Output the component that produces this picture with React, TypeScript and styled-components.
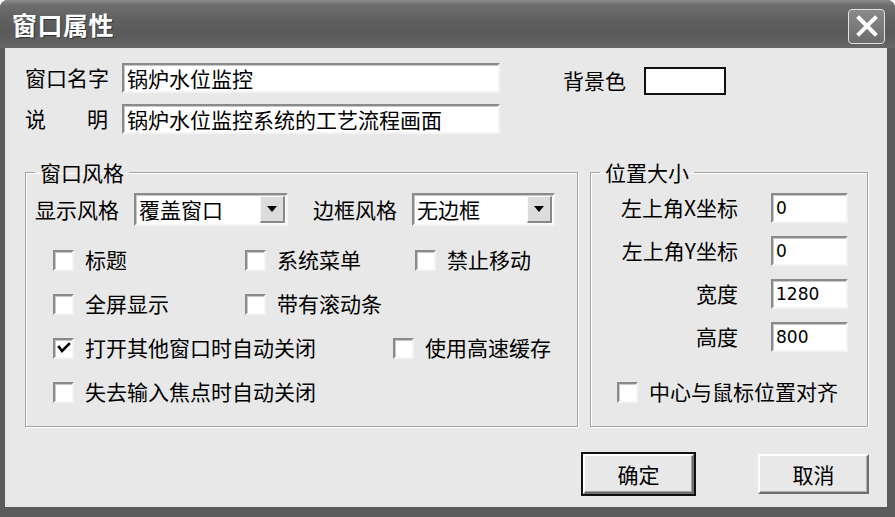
import React, { useState } from 'react';
import styled, { createGlobalStyle } from 'styled-components';

const GlobalStyle = createGlobalStyle`
  html, body {
    margin: 0;
    padding: 0;
    background: #ffffff;
  }
  body {
    font-family: "Noto Sans CJK SC", "DejaVu Sans", sans-serif;
    color: #000;
  }
`;

interface CheckItem {
  label: string;
  checked?: boolean;
  width?: number;
}

const styleRows: CheckItem[][] = [
  [{ label: '标题', width: 192 }, { label: '系统菜单', width: 170 }, { label: '禁止移动' }],
  [{ label: '全屏显示', width: 192 }, { label: '带有滚动条' }],
  [{ label: '打开其他窗口时自动关闭', checked: true, width: 340 }, { label: '使用高速缓存' }],
  [{ label: '失去输入焦点时自动关闭' }],
];

const positionFields = [
  { label: '左上角X坐标', value: '0' },
  { label: '左上角Y坐标', value: '0' },
  { label: '宽度', value: '1280' },
  { label: '高度', value: '800' },
];

const CheckBox: React.FC<{ item: CheckItem }> = ({ item }) => {
  const [checked, setChecked] = useState(!!item.checked);
  return (
    <CheckLabel $width={item.width} onClick={() => setChecked(!checked)}>
      <CheckSquare>
        {checked && (
          <svg width="14" height="14" viewBox="0 0 14 14">
            <path d="M2 6 L5 10 L12 3" stroke="#000" strokeWidth="2.6" fill="none" strokeLinecap="square" />
          </svg>
        )}
      </CheckSquare>
      <span>{item.label}</span>
    </CheckLabel>
  );
};

const Select: React.FC<{ value: string; width: number }> = ({ value, width }) => (
  <SelectBox $width={width}>
    <span>{value}</span>
    <DropButton>
      <svg width="10" height="6" viewBox="0 0 10 6">
        <path d="M0 0 H10 L5 6 Z" fill="#000" />
      </svg>
    </DropButton>
  </SelectBox>
);

const App: React.FC = () => {
  return (
    <>
      <GlobalStyle />
      <Window>
        <TitleBar>
          <Title>窗口属性</Title>
          <CloseButton>
            <svg width="22" height="22" viewBox="0 0 22 22">
              <path d="M3 3 L19 19 M19 3 L3 19" stroke="#fff" strokeWidth="4" strokeLinecap="square" />
            </svg>
          </CloseButton>
        </TitleBar>
        <Body>
          <TopArea>
            <FieldColumn>
              <FieldRow>
                <FieldLabel>窗口名字</FieldLabel>
                <TextBox $width={378}>锅炉水位监控</TextBox>
              </FieldRow>
              <FieldRow>
                <FieldLabel>说明</FieldLabel>
                <TextBox $width={378}>锅炉水位监控系统的工艺流程画面</TextBox>
              </FieldRow>
            </FieldColumn>
            <ColorPicker>
              <span>背景色</span>
              <ColorSwatch />
            </ColorPicker>
          </TopArea>

          <Groups>
            <GroupBox $width={553}>
              <Legend>窗口风格</Legend>
              <SelectRow>
                <SelectLabel>显示风格</SelectLabel>
                <Select value="覆盖窗口" width={154} />
                <SelectLabel $offset={25}>边框风格</SelectLabel>
                <Select value="无边框" width={143} />
              </SelectRow>
              <CheckGrid>
                {styleRows.map((row, i) => (
                  <CheckRow key={i}>
                    {row.map((item) => (
                      <CheckBox key={item.label} item={item} />
                    ))}
                  </CheckRow>
                ))}
              </CheckGrid>
            </GroupBox>

            <GroupBox $width={278}>
              <Legend>位置大小</Legend>
              <PositionGrid>
                {positionFields.map((f) => (
                  <React.Fragment key={f.label}>
                    <PositionLabel>{f.label}</PositionLabel>
                    <NumberBox>{f.value}</NumberBox>
                  </React.Fragment>
                ))}
              </PositionGrid>
              <CenterRow>
                <CheckBox item={{ label: '中心与鼠标位置对齐' }} />
              </CenterRow>
            </GroupBox>
          </Groups>

          <ButtonRow>
            <DialogButton $primary>确定</DialogButton>
            <DialogButton>取消</DialogButton>
          </ButtonRow>
        </Body>
      </Window>
    </>
  );
};

const Window = styled.div`
  width: 895px;
  height: 517px;
  box-sizing: border-box;
  background: #5c5c5c;
  border-radius: 8px 8px 0 0;
  padding: 0 8px 10px 5px;
  display: flex;
  flex-direction: column;
`;

const TitleBar = styled.div`
  height: 48px;
  margin: 0 -8px 0 -5px;
  padding: 0 10px 0 12px;
  border-radius: 8px 8px 0 0;
  background: linear-gradient(#8c8c8c 0, #6e6e6e 10%, #5e5e5e 45%, #5a5a5a 70%, #666 100%);
  display: flex;
  align-items: center;
  justify-content: space-between;
`;

const Title = styled.div`
  color: #fff;
  font-size: 25px;
  font-weight: 700;
  letter-spacing: 0.5px;
  text-shadow: 1px 1px 0 #333;
`;

const CloseButton = styled.div`
  width: 35px;
  height: 33px;
  margin-top: 4px;
  border: 1px solid #e0e0e0;
  border-radius: 4px;
  background: linear-gradient(#8a8a8a, #6c6c6c);
  display: flex;
  align-items: center;
  justify-content: center;
`;

const Body = styled.div`
  flex: 1;
  background: #e8e8e8;
  padding: 15px 18px 0 20px;
  font-size: 21px;
  line-height: 1.2;
`;

const TopArea = styled.div`
  display: flex;
  align-items: flex-start;
`;

const FieldColumn = styled.div`
  display: flex;
  flex-direction: column;
  gap: 11px;
`;

const FieldRow = styled.div`
  display: flex;
  align-items: center;
  gap: 14px;
`;

const FieldLabel = styled.div`
  width: 83px;
  text-align: justify;
  text-align-last: justify;
  white-space: nowrap;
`;

const sunken = `
  box-sizing: border-box;
  background: #fff;
  border-top: 2px solid #8a8a8a;
  border-left: 2px solid #8a8a8a;
  border-bottom: 2px solid #f4f4f4;
  border-right: 2px solid #f4f4f4;
  box-shadow: inset 1px 1px 0 #c8c8c8;
`;

const TextBox = styled.div<{ $width: number }>`
  ${sunken}
  width: ${(p) => p.$width}px;
  height: 30px;
  padding: 0 3px;
  font-size: 21px;
  line-height: 26px;
  white-space: nowrap;
  overflow: hidden;
`;

const ColorPicker = styled.div`
  margin-left: 63px;
  margin-top: 4px;
  display: flex;
  align-items: center;
  gap: 18px;
`;

const ColorSwatch = styled.div`
  width: 82px;
  height: 28px;
  box-sizing: border-box;
  background: #fff;
  border: 2px solid #111;
`;

const Groups = styled.div`
  display: flex;
  gap: 12px;
  margin-top: 25px;
`;

const GroupBox = styled.fieldset<{ $width: number }>`
  width: ${(p) => p.$width}px;
  box-sizing: border-box;
  height: 268px;
  margin: 0;
  padding: 8px 0 0 9px;
  border: 1px solid #a4a4a4;
  box-shadow: inset 1px 1px 0 #fff, 1px 1px 0 #fff;
  min-inline-size: 0;
`;

const Legend = styled.legend`
  margin-left: 0;
  padding: 0 5px;
  font-size: 21px;
  line-height: 26px;
`;

const SelectRow = styled.div`
  display: flex;
  align-items: center;
`;

const SelectLabel = styled.div<{ $offset?: number }>`
  margin-left: ${(p) => p.$offset ?? 0}px;
  margin-right: 15px;
  white-space: nowrap;
`;

const SelectBox = styled.div<{ $width: number }>`
  ${sunken}
  width: ${(p) => p.$width}px;
  height: 33px;
  flex: none;
  display: flex;
  align-items: center;
  justify-content: space-between;
  padding-left: 3px;
  font-size: 21px;
`;

const DropButton = styled.div`
  width: 25px;
  height: 27px;
  box-sizing: border-box;
  margin-right: 1px;
  background: #dcdcdc;
  border-top: 1px solid #f8f8f8;
  border-left: 1px solid #f8f8f8;
  border-bottom: 2px solid #888;
  border-right: 2px solid #888;
  display: flex;
  align-items: center;
  justify-content: center;
`;

const CheckGrid = styled.div`
  display: flex;
  flex-direction: column;
  gap: 16px;
  margin-top: 20px;
  padding-left: 18px;
`;

const CheckRow = styled.div`
  display: flex;
  align-items: center;
  height: 28px;
`;

const CheckLabel = styled.label<{ $width?: number }>`
  display: flex;
  align-items: center;
  gap: 11px;
  width: ${(p) => (p.$width ? `${p.$width}px` : 'auto')};
  cursor: default;
  white-space: nowrap;
`;

const CheckSquare = styled.span`
  ${sunken}
  width: 21px;
  height: 21px;
  flex: none;
  display: flex;
  align-items: center;
  justify-content: center;
`;

const PositionGrid = styled.div`
  display: grid;
  grid-template-columns: auto 77px;
  justify-content: end;
  align-items: center;
  column-gap: 33px;
  row-gap: 13px;
  padding-right: 19px;
`;

const PositionLabel = styled.div`
  text-align: right;
  white-space: nowrap;
`;

const NumberBox = styled.div`
  ${sunken}
  height: 30px;
  padding: 0 3px;
  font-family: "DejaVu Sans", "Liberation Sans", sans-serif;
  font-size: 17px;
  line-height: 26px;
`;

const CenterRow = styled.div`
  display: flex;
  align-items: center;
  height: 28px;
  margin-top: 26px;
  padding-left: 17px;
`;

const ButtonRow = styled.div`
  display: flex;
  justify-content: flex-end;
  gap: 64px;
  margin-top: 27px;
`;

const DialogButton = styled.button<{ $primary?: boolean }>`
  width: 111px;
  height: 40px;
  box-sizing: border-box;
  background: #e8e8e8;
  font-family: "Noto Sans CJK SC", sans-serif;
  font-size: 21px;
  color: #000;
  border-top: 2px solid #fff;
  border-left: 2px solid #fff;
  border-bottom: 2px solid #6e6e6e;
  border-right: 2px solid #6e6e6e;
  outline: ${(p) => (p.$primary ? '2px solid #111' : 'none')};
  outline-offset: 0;
  box-shadow: ${(p) => (p.$primary ? 'inset -1px -1px 0 #a0a0a0' : 'inset -1px -1px 0 #b4b4b4')};
  padding: 0;
  cursor: pointer;
`;

export default App;
